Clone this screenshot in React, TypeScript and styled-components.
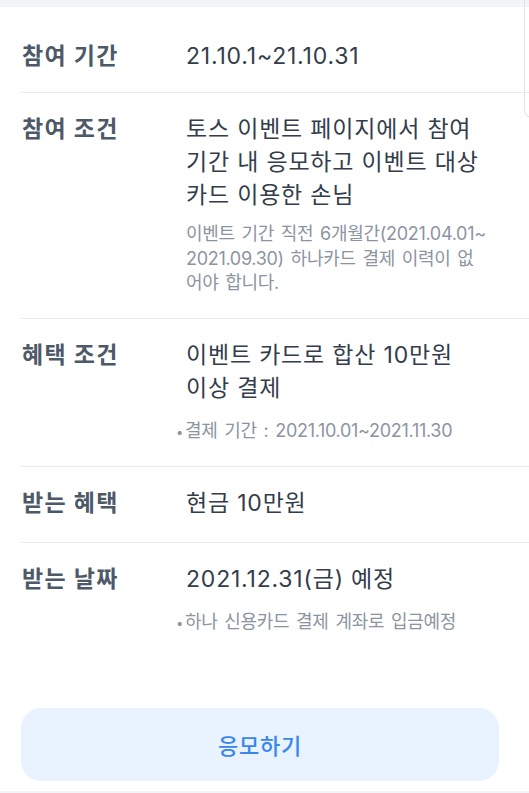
import React from "react";
import styled, { createGlobalStyle } from "styled-components";

const GlobalStyle = createGlobalStyle`
  body {
    margin: 0;
    background: #ffffff;
    font-family: Inter, "Noto Sans CJK KR", sans-serif;
    -webkit-font-smoothing: antialiased;
  }
`;

const Page = styled.div`
  position: relative;
  width: 529px;
  min-height: 793px;
  overflow: hidden;
  background: #ffffff;
`;

const TopBand = styled.div`
  height: 7px;
  background: #f2f4f6;
`;

const EdgeCard = styled.div`
  position: absolute;
  top: 0;
  left: 524px;
  width: 30px;
  height: 117px;
  border-left: 1px solid #dfe2e6;
  border-bottom: 1px solid #dfe2e6;
  border-bottom-left-radius: 8px;
`;

const InfoList = styled.div`
  display: flex;
  flex-direction: column;
  padding: 13px 0 0 21px;
`;

const Row = styled.div`
  display: grid;
  grid-template-columns: 165px 300px;
  padding: 20px 0 22px;
  border-bottom: 1px solid #e9ebee;

  &:first-child {
    padding-bottom: 19px;
  }

  &:last-child {
    border-bottom: none;
  }
`;

const Label = styled.div`
  padding-left: 1px;
  font-size: 23px;
  line-height: 33px;
  font-weight: 700;
  letter-spacing: 1.3px;
  color: #4e5968;
`;

const Value = styled.div`
  display: flex;
  flex-direction: column;
`;

const Main = styled.div`
  font-size: 23px;
  line-height: 33px;
  letter-spacing: 0.8px;
  color: #333d4b;
  word-break: keep-all;
`;

const Note = styled.div<{ $bullet?: boolean }>`
  margin-top: ${({ $bullet }) => ($bullet ? "14px" : "10px")};
  margin-left: ${({ $bullet }) => ($bullet ? "-10px" : "0")};
  font-size: 18px;
  line-height: 24.5px;
  letter-spacing: -0.3px;
  word-spacing: 2px;
  color: #8b95a1;

  &::before {
    content: ${({ $bullet }) => ($bullet ? '"•"' : "none")};
    margin-right: 2px;
    font-size: 13px;
  }
`;

const ButtonArea = styled.div`
  padding: 50px 30px 10px 21px;
`;

const ApplyButton = styled.button`
  width: 100%;
  height: 73px;
  border: none;
  border-radius: 20px;
  background: #e8f3ff;
  color: #3b86ec;
  font-family: inherit;
  font-size: 22px;
  font-weight: 500;
  letter-spacing: 0.8px;
  cursor: pointer;
`;

const BottomBand = styled.div`
  height: 10px;
  background: #f2f4f6;
`;

type Info = {
  label: string;
  main: string;
  note?: React.ReactNode;
  bullet?: boolean;
};

const infos: Info[] = [
  { label: "참여 기간", main: "21.10.1~21.10.31" },
  {
    label: "참여 조건",
    main: "토스 이벤트 페이지에서 참여 기간 내 응모하고 이벤트 대상 카드 이용한 손님",
    note: (
      <>
        이벤트 기간 직전 6개월간(2021.04.01~
        <wbr />
        2021.09.30) 하나카드 결제 이력이 없어야 합니다.
      </>
    ),
  },
  {
    label: "혜택 조건",
    main: "이벤트 카드로 합산 10만원 이상 결제",
    note: "결제 기간 : 2021.10.01~2021.11.30",
    bullet: true,
  },
  { label: "받는 혜택", main: "현금 10만원" },
  {
    label: "받는 날짜",
    main: "2021.12.31(금) 예정",
    note: "하나 신용카드 결제 계좌로 입금예정",
    bullet: true,
  },
];

const App: React.FC = () => {
  return (
    <Page>
      <GlobalStyle />
      <TopBand />
      <EdgeCard />
      <InfoList>
        {infos.map((info) => (
          <Row key={info.label}>
            <Label>{info.label}</Label>
            <Value>
              <Main>{info.main}</Main>
              {info.note && <Note $bullet={info.bullet}>{info.note}</Note>}
            </Value>
          </Row>
        ))}
      </InfoList>
      <ButtonArea>
        <ApplyButton>응모하기</ApplyButton>
      </ButtonArea>
      <BottomBand />
    </Page>
  );
};

export default App;
